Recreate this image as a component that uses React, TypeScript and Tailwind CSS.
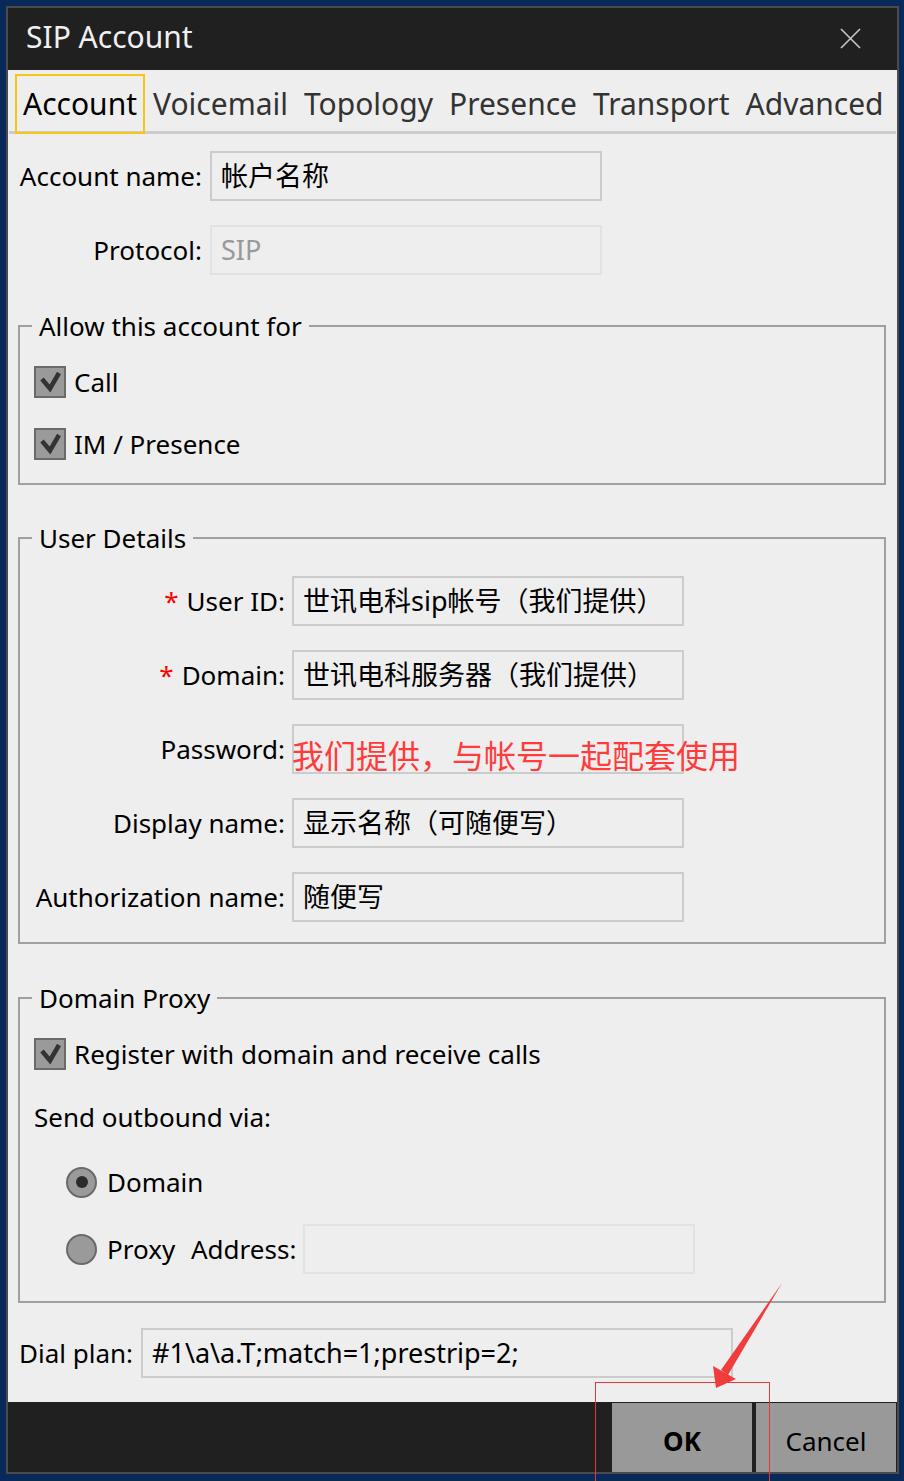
import React from "react";

const tabs = ["Account", "Voicemail", "Topology", "Presence", "Transport", "Advanced"];

const CheckBox = () => (
  <div className="w-[32px] h-[32px] shrink-0 border-2 border-[#6a6a6a] bg-[#9a9a9a] flex items-center justify-center">
    <svg width="28" height="28" viewBox="0 0 28 28">
      <path d="M6 11 L14 20.5 L23 5" fill="none" stroke="#333333" strokeWidth="4.5" />
    </svg>
  </div>
);

const Radio = ({ on }: { on?: boolean }) => (
  <div className="w-[31px] h-[31px] shrink-0 rounded-full border-2 border-[#6a6a6a] bg-[#9a9a9a] flex items-center justify-center">
    {on && <div className="w-[12px] h-[12px] rounded-full bg-[#2b2b2b]" />}
  </div>
);

interface FieldProps {
  value?: string;
  className?: string;
  disabled?: boolean;
  children?: React.ReactNode;
}

const Field = ({ value, className, disabled, children }: FieldProps) => (
  <div
    className={`relative h-[50px] shrink-0 border-2 pl-[9px] flex items-center whitespace-nowrap text-[27px] ${
      disabled ? "border-[#e2e2e2] text-[#999999]" : "border-[#cccccc] text-black"
    } ${className ?? ""}`}
  >
    {value}
    {children}
  </div>
);

const Group = ({ title, className, children }: { title: string; className: string; children: React.ReactNode }) => (
  <div className={`ml-[10px] w-[868px] border-2 border-[#a0a0a0] flex flex-col ${className}`}>
    <div className="-mt-[19px] ml-[12px] px-[7px] w-fit bg-[#eeeeee] leading-[36px]">{title}</div>
    {children}
  </div>
);

const Req = () => <span className="text-[#ff0000] mr-[8px]">*</span>;

const DetailRow = ({ label, req, className, children }: { label: string; req?: boolean; className: string; children: React.ReactNode }) => (
  <div className={`flex items-center h-[50px] ${className}`}>
    <div className="w-[265px] text-right whitespace-nowrap">
      {req && <Req />}
      {label}
    </div>
    <div className="ml-[7px]">{children}</div>
  </div>
);

export default function App() {
  return (
    <div className="relative w-[904px] h-[1481px] overflow-hidden bg-[#08295a] pt-[6px] pl-[6px] font-['Noto_Sans','Noto_Sans_CJK_SC',sans-serif] text-[26px] leading-[36px] text-black">
      {/* dialog */}
      <div className="w-[893px] h-[1468px] border-2 border-[#4b4b4b] bg-[#eeeeee] flex flex-col">
        {/* title bar */}
        <div className="h-[62px] shrink-0 bg-[#202020] flex items-center justify-between pl-[18px] pr-[36px] pb-[4px]">
          <span className="text-[30px] leading-[40px] text-[#f0f0f0]">SIP Account</span>
          <svg width="21" height="21" viewBox="0 0 21 21" className="mt-[2px]">
            <path d="M1 1 L20 20 M20 1 L1 20" stroke="#c8c8c8" strokeWidth="1.6" />
          </svg>
        </div>

        {/* tabs */}
        <div className="flex pt-[4px] pl-[7px]">
          {tabs.map((t, i) => (
            <div
              key={t}
              className={`relative z-10 h-[60px] px-[6px] flex items-center border-2 text-[30px] leading-[40px] ${
                i === 0 ? "border-[#f5c518] text-black" : "border-transparent text-[#333333]"
              }`}
            >
              {t}
            </div>
          ))}
        </div>
        <div className="h-[3px] -mt-[3px] mx-[1px] bg-[#cccccc]" />

        {/* content */}
        <div className="flex-1 flex flex-col">
          <div className="mt-[17px] flex items-center h-[50px]">
            <div className="w-[194px] text-right whitespace-nowrap">Account name:</div>
            <Field className="ml-[8px] w-[392px]" value="帐户名称" />
          </div>
          <div className="mt-[24px] flex items-center h-[50px]">
            <div className="w-[194px] text-right">Protocol:</div>
            <Field className="ml-[8px] w-[392px]" value="SIP" disabled />
          </div>

          <Group title="Allow this account for" className="mt-[50px] pb-[23px]">
            <div className="mt-[22px] h-[32px] pl-[14px] flex items-center gap-[8px]">
              <CheckBox />
              <span>Call</span>
            </div>
            <div className="mt-[30px] h-[32px] pl-[14px] flex items-center gap-[8px]">
              <CheckBox />
              <span>IM / Presence</span>
            </div>
          </Group>

          <Group title="User Details" className="mt-[52px] pb-[20px]">
            <DetailRow label="User ID:" req className="mt-[20px]">
              <Field className="w-[392px]" value="世讯电科sip帐号（我们提供）" />
            </DetailRow>
            <DetailRow label="Domain:" req className="mt-[24px]">
              <Field className="w-[392px]" value="世讯电科服务器（我们提供）" />
            </DetailRow>
            <DetailRow label="Password:" className="mt-[24px]">
              <Field className="w-[392px]">
                <span className="absolute -left-[2px] top-[14px] text-[32px] leading-[32px] text-[#ff3b3b]">
                  我们提供，与帐号一起配套使用
                </span>
              </Field>
            </DetailRow>
            <DetailRow label="Display name:" className="mt-[24px]">
              <Field className="w-[392px]" value="显示名称（可随便写）" />
            </DetailRow>
            <DetailRow label="Authorization name:" className="mt-[24px]">
              <Field className="w-[392px]" value="随便写" />
            </DetailRow>
          </Group>

          <Group title="Domain Proxy" className="mt-[53px] pb-[27px]">
            <div className="mt-[22px] h-[32px] pl-[14px] flex items-center gap-[8px]">
              <CheckBox />
              <span>Register with domain and receive calls</span>
            </div>
            <div className="mt-[29px] pl-[14px]">Send outbound via:</div>
            <div className="mt-[31px] h-[32px] pl-[46px] flex items-center">
              <Radio on />
              <span className="ml-[10px]">Domain</span>
            </div>
            <div className="mt-[26px] h-[50px] pl-[46px] flex items-center">
              <Radio />
              <span className="ml-[10px] w-[84px]">Proxy</span>
              <span className="w-[112px]">Address:</span>
              <Field className="w-[392px]" disabled />
            </div>
          </Group>

          <div className="mt-[25px] h-[50px] pl-[11px] flex items-center">
            <div className="w-[122px]">Dial plan:</div>
            <Field className="w-[592px]" value="#1\a\a.T;match=1;prestrip=2;" />
          </div>
        </div>

        {/* footer */}
        <div className="h-[70px] shrink-0 bg-[#202020] flex justify-end pt-[1px] pr-[1px] gap-[4px]">
          <button className="w-[140px] h-[69px] bg-[#999999] pt-[6px] font-bold text-black">OK</button>
          <button className="w-[140px] h-[69px] bg-[#999999] pt-[6px] text-black">Cancel</button>
        </div>
      </div>

      {/* red annotation over the OK button */}
      <div className="absolute left-[595px] top-[1382px] w-[175px] h-[110px] border border-[#e53935]" />
      <svg className="absolute left-0 top-0 pointer-events-none" width="904" height="1481">
        <polygon points="782,1283 721,1370 728,1375" fill="#f03c3c" />
        <polygon points="716,1388 713,1366 736,1379" fill="#f03c3c" />
      </svg>
    </div>
  );
}
